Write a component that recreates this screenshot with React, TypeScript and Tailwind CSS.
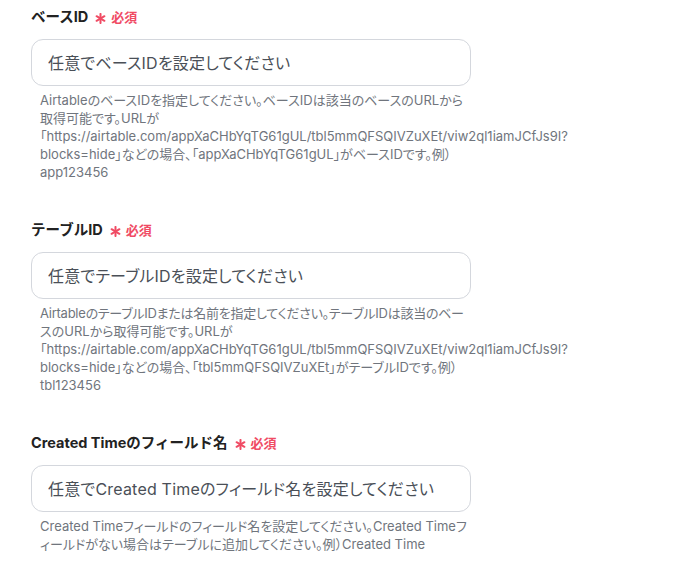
import React from "react";

function Asterisk() {
  return (
    <svg width="11" height="11" viewBox="0 0 12 12" className="shrink-0">
      <g stroke="#f04b64" strokeWidth="2.2" strokeLinecap="round">
        <line x1="6" y1="1" x2="6" y2="11" />
        <line x1="1.7" y1="3.5" x2="10.3" y2="8.5" />
        <line x1="1.7" y1="8.5" x2="10.3" y2="3.5" />
      </g>
    </svg>
  );
}

function Field({
  label,
  placeholder,
  help,
}: {
  label: string;
  placeholder: string;
  help: React.ReactNode;
}) {
  return (
    <div className="flex flex-col">
      <div className="flex h-[20px] items-center">
        <span className="text-[14.5px] font-bold leading-[20px] text-[#222222] [font-feature-settings:'kern']">{label}</span>
        <span className="ml-[7px] mt-[2px]">
          <Asterisk />
        </span>
        <span className="ml-[5px] text-[13px] font-semibold leading-[20px] text-[#f04b64]">必須</span>
      </div>
      <input
        readOnly
        placeholder={placeholder}
        className="mt-[12px] h-[47px] w-[440px] rounded-[12px] border border-[#d4d7dd] bg-white px-[16px] font-['Inter','Noto_Sans_CJK_JP',sans-serif] text-[16px] tracking-[0.2px] text-[#444] outline-none [font-feature-settings:'palt'] placeholder:text-[#4a4f57]"
      />
      <p className="ml-[9px] mt-[5px] w-[431px] text-[13px] leading-[18px] text-[#70757d]">{help}</p>
    </div>
  );
}

export default function App() {
  return (
    <div className="min-h-[568px] w-[679px] bg-white pl-[31px] pt-[7px] font-['Inter','Noto_Sans_CJK_JP',sans-serif] [font-feature-settings:'palt']">
      <div className="flex flex-col gap-[39px]">
        <Field
          label="ベースID"
          placeholder="任意でベースIDを設定してください"
          help={
            <>
              AirtableのベースIDを指定してください。ベースIDは該当のベースのURLから取得可能です。URLが「https://airtable.com/appXaCHbYqTG61gUL/tbl5mmQFSQIVZuXEt/viw2ql1iamJCfJs9I?
              <wbr />
              blocks=hide」などの場合、「appXaCHbYqTG61gUL」がベースIDです。例）app123456
            </>
          }
        />
        <Field
          label="テーブルID"
          placeholder="任意でテーブルIDを設定してください"
          help={
            <>
              <span className="tracking-[-0.25px]">AirtableのテーブルIDまたは名前を指定してください。テーブルIDは該当のベー</span>
              スのURLから取得可能です。URLが「https://airtable.com/appXaCHbYqTG61gUL/tbl5mmQFSQIVZuXEt/viw2ql1iamJCfJs9I?
              <wbr />
              blocks=hide」などの場合、「tbl5mmQFSQIVZuXEt」がテーブルIDです。例）tbl123456
            </>
          }
        />
        <Field
          label="Created Timeのフィールド名"
          placeholder="任意でCreated Timeのフィールド名を設定してください"
          help={
            <>
              Created Timeフィールドのフィールド名を設定してください。Created Timeフ
              <wbr />
              ィールドがない場合はテーブルに追加してください。例）Created Time
            </>
          }
        />
      </div>
    </div>
  );
}
